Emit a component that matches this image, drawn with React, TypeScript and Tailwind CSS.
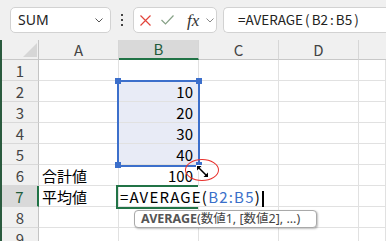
import React from "react";

const cell = "h-[21px] shrink-0 border-r border-b border-[#e1e1e1] flex items-center";
const rowHdr =
  "w-[37px] h-[21px] shrink-0 bg-[#f0f0f0] border-r border-b border-r-[#c4c4c4] border-b-[#d9d9d9] flex items-center justify-center text-[15px] leading-[21px] text-[#444]";

type RowProps = {
  n: number;
  a?: string;
  b?: React.ReactNode;
  sel?: boolean;
  active?: boolean;
  hdrSel?: boolean;
};

function Row({ n, a, b, sel, active, hdrSel }: RowProps) {
  return (
    <div className="flex h-[21px]">
      {hdrSel ? (
        <div className="w-[37px] h-[21px] shrink-0 bg-[#d9d9d9] border-r-2 border-b border-r-[#217346] border-b-[#d9d9d9] flex items-center justify-center text-[15px] leading-[21px] text-[#1f5c3a]">
          {n}
        </div>
      ) : (
        <div className={rowHdr}>{n}</div>
      )}
      <div className={`${cell} w-[80px] pl-[3px] text-[15px] leading-[21px] text-black`}>{a}</div>
      {active ? (
        <div className="h-[21px] w-[80px] shrink-0 border-b border-[#e1e1e1] flex items-center relative z-10 text-[15px] leading-[21px] text-black whitespace-nowrap overflow-visible pl-[1px]">
          {b}
        </div>
      ) : (
        <div
          className={`${cell} w-[80px] justify-end pr-[5px] text-[15px] leading-[21px] text-black ${
            sel ? "bg-[#e8ebf6]" : ""
          }`}
        >
          {b}
        </div>
      )}
      <div className={`${cell} w-[80px]`} />
      <div className={`${cell} w-[80px]`} />
      <div className={`${cell} flex-1`} />
    </div>
  );
}

export default function App() {
  return (
    <div className="relative w-[386px] h-[241px] overflow-hidden bg-white font-['Noto_Sans_CJK_JP',sans-serif]">
      {/* Toolbar */}
      <div className="h-[40px] bg-[#f0f0f0] flex items-start pt-[7px] pl-[10px]">
        <div className="w-[101px] h-[26px] shrink-0 bg-white border border-[#d2d2d2] rounded-[5px] flex items-center justify-between pl-[7px] pr-[7px]">
          <span className="text-[14px] leading-none text-[#222] font-['Noto_Sans',sans-serif]">SUM</span>
          <svg width="8" height="5" viewBox="0 0 8 5">
            <path d="M0.5 0.5 L4 4 L7.5 0.5" fill="none" stroke="#555" strokeWidth="1" />
          </svg>
        </div>
        <div className="w-[22px] h-[26px] shrink-0 flex flex-col items-center justify-center gap-[3px]">
          <div className="w-[2px] h-[2px] bg-[#444]" />
          <div className="w-[2px] h-[2px] bg-[#444]" />
          <div className="w-[2px] h-[2px] bg-[#444]" />
        </div>
        <div className="w-[84px] h-[26px] shrink-0 bg-white border border-[#d2d2d2] rounded-[5px] flex items-center pl-[6px]">
          <svg width="11" height="11" viewBox="0 0 11 11">
            <path d="M0.5 0.5 L10.5 10.5 M10.5 0.5 L0.5 10.5" stroke="#e2443b" strokeWidth="1.2" fill="none" />
          </svg>
          <svg width="13" height="10" viewBox="0 0 13 10" className="ml-[10px]">
            <path d="M0.5 5 L4.5 9 L12.5 0.5" stroke="#86a186" strokeWidth="1.2" fill="none" />
          </svg>
          <span className="ml-[13px] text-[17px] leading-none italic text-[#333] font-['Liberation_Serif',serif]">
            fx
          </span>
          <svg width="8" height="5" viewBox="0 0 8 5" className="ml-[7px]">
            <path d="M0.5 0.5 L4 4 L7.5 0.5" fill="none" stroke="#888" strokeWidth="1" />
          </svg>
        </div>
        <div className="ml-[6px] flex-1 h-[26px] bg-white border border-r-0 border-[#d2d2d2] rounded-l-[5px] flex items-center pl-[14px] text-[13.5px] leading-none text-[#222] whitespace-nowrap">
          <span>=AVERAGE</span>
          <span className="ml-[2px]">(</span>
          <span className="ml-[2px]">B2</span>
          <span className="mx-[2px]">:</span>
          <span>B5</span>
          <span className="ml-[2px]">)</span>
        </div>
      </div>

      {/* Grid */}
      <div className="border-l-2 border-[#2b5b3f]">
        {/* header row */}
        <div className="flex h-[20px]">
          <div className="w-[37px] h-[20px] shrink-0 bg-[#f0f0f0] border-r border-b border-r-[#c4c4c4] border-b-[#c8c8c8] flex items-end justify-end pr-[1px] pb-[2px]">
            <svg width="14" height="14" viewBox="0 0 14 14">
              <polygon points="14,0 14,14 0,14" fill="#d6d6d6" />
            </svg>
          </div>
          <div className="w-[80px] h-[20px] shrink-0 bg-[#f0f0f0] border-r border-b border-r-[#d6d6d6] border-b-[#c8c8c8] flex items-center justify-center text-[15px] leading-[20px] text-[#444]">
            A
          </div>
          <div className="w-[80px] h-[20px] shrink-0 bg-[#d9d9d9] border-r border-b-2 border-r-[#d6d6d6] border-b-[#217346] flex items-center justify-center text-[15px] leading-[20px] text-[#1f5c3a]">
            B
          </div>
          <div className="w-[80px] h-[20px] shrink-0 bg-[#f0f0f0] border-r border-b border-r-[#d6d6d6] border-b-[#c8c8c8] flex items-center justify-center text-[15px] leading-[20px] text-[#444]">
            C
          </div>
          <div className="w-[80px] h-[20px] shrink-0 bg-[#f0f0f0] border-r border-b border-r-[#d6d6d6] border-b-[#c8c8c8] flex items-center justify-center text-[15px] leading-[20px] text-[#444]">
            D
          </div>
          <div className="flex-1 h-[20px] bg-[#f0f0f0] border-b border-b-[#c8c8c8]" />
        </div>
        <Row n={1} />
        <Row n={2} b="10" sel />
        <Row n={3} b="20" sel />
        <Row n={4} b="30" sel />
        <Row n={5} b="40" sel />
        <Row n={6} a="合計値" b="100" />
        <Row
          n={7}
          a="平均値"
          hdrSel
          active
          b={
            <span className="tracking-[1.2px]">
              =AVERAGE(<span className="text-[#3a6fc9]">B2:B5</span>)
            </span>
          }
        />
        <Row n={8} />
        <Row n={9} />
      </div>

      {/* selection range B2:B5 */}
      <div className="absolute left-[117px] top-[80px] w-[83px] h-[87px] border-2 border-[#3c6fcb] z-20" />
      <div className="absolute left-[115px] top-[78px] w-[6px] h-[6px] bg-[#3c6fcb] z-20" />
      <div className="absolute left-[196px] top-[78px] w-[6px] h-[6px] bg-[#3c6fcb] z-20" />
      <div className="absolute left-[115px] top-[162px] w-[6px] h-[6px] bg-[#3c6fcb] z-20" />
      <div className="absolute left-[196px] top-[162px] w-[6px] h-[6px] bg-[#3c6fcb] z-20" />

      {/* active cell B7 */}
      <div className="absolute left-[116px] top-[185px] w-[82px] h-[24px] border-2 border-r-0 border-[#217346] z-20" />
      {/* caret */}
      <div className="absolute left-[262px] top-[191px] w-[2px] h-[16px] bg-black z-20" />

      {/* tooltip */}
      <div className="absolute left-[134px] top-[210px] w-[183px] h-[18px] bg-white border border-[#a9a9a9] rounded-[4px] shadow-[1px_1px_2px_rgba(0,0,0,0.25)] z-30 flex items-center pl-[6px] text-[12.5px] leading-none whitespace-nowrap font-['Noto_Sans','Noto_Sans_CJK_JP',sans-serif] text-[#444]">
        <span className="font-bold text-[#555]">AVERAGE</span>
        <span>(数値1, [数値2], ...)</span>
      </div>

      {/* red ellipse */}
      <div className="absolute left-[185px] top-[159px] w-[34px] h-[22px] rounded-[50%] border-[1.5px] border-[#e8302c] z-30" />

      {/* resize cursor */}
      <svg className="absolute left-[195px] top-[164px] z-40" width="16" height="16" viewBox="0 0 16 16">
        <path d="M2 2 L13 13" stroke="white" strokeWidth="3.5" />
        <path d="M2 2 L7 2 L2 7 Z M13 13 L8 13 L13 8 Z" fill="white" stroke="white" strokeWidth="2" />
        <path d="M3 3 L12 12" stroke="black" strokeWidth="1.5" />
        <path d="M2 2 L6.5 2 L2 6.5 Z M13 13 L8.5 13 L13 8.5 Z" fill="black" />
      </svg>
    </div>
  );
}
